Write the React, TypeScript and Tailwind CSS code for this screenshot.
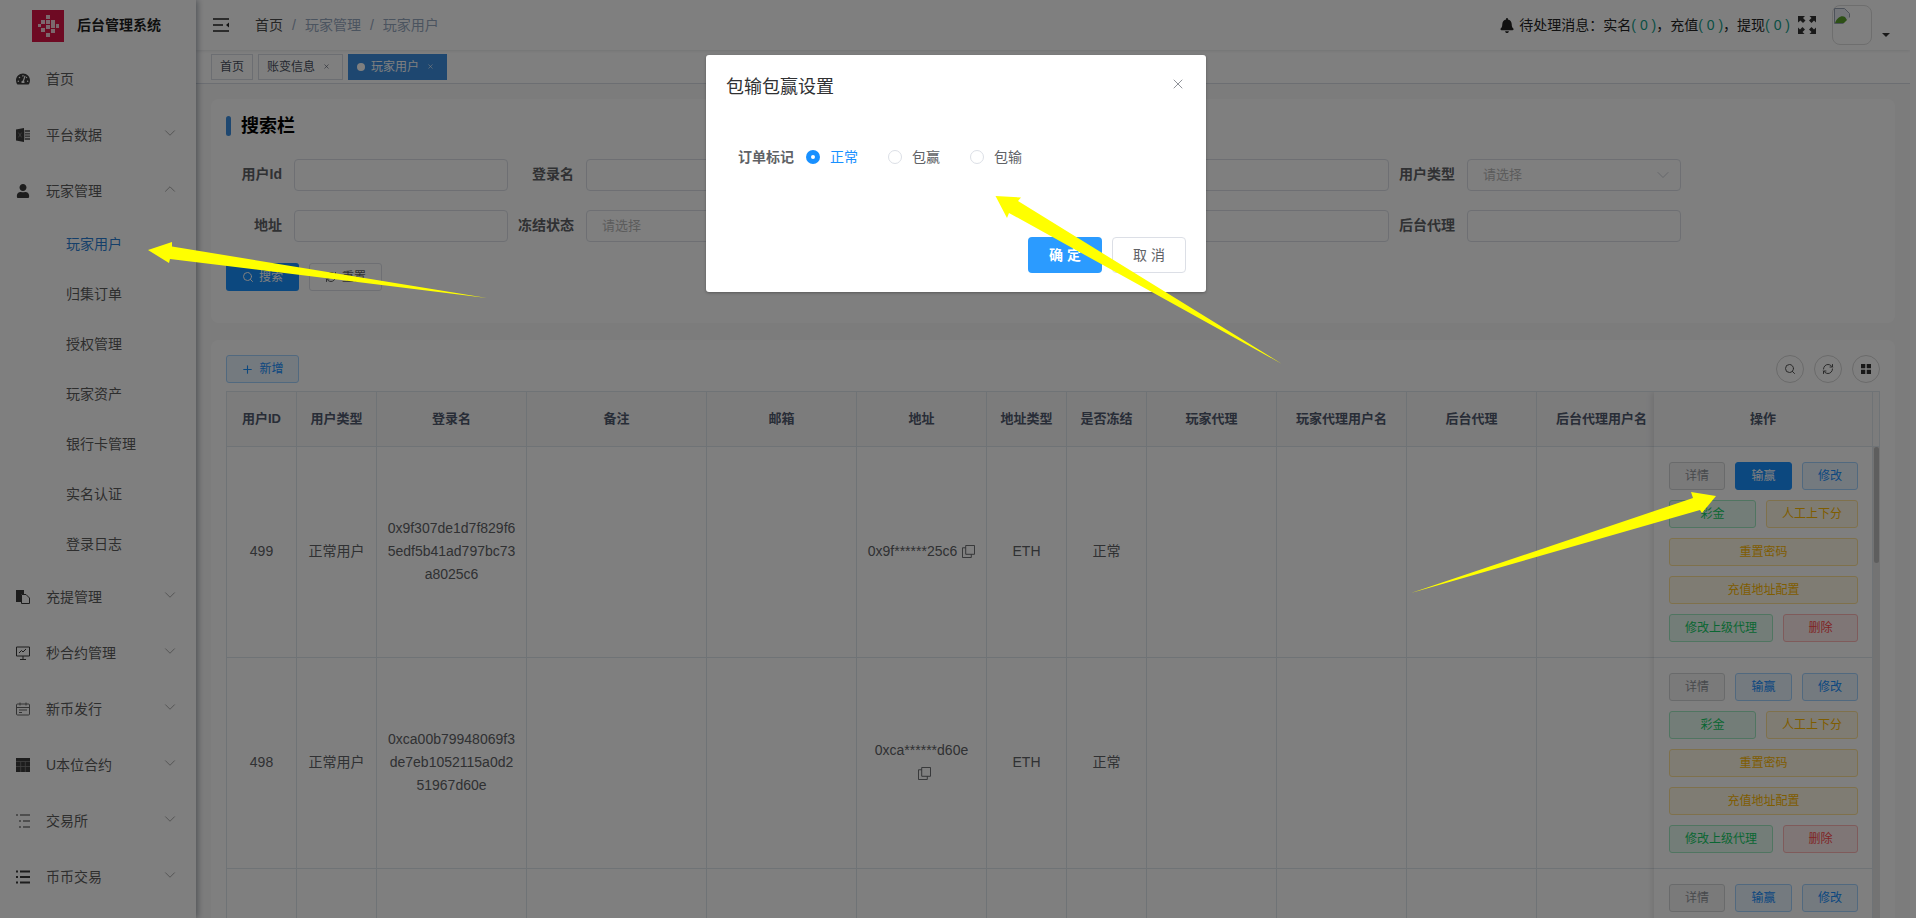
import { ReactNode } from 'react';
import { FaBell, FaTachometerAlt, FaUser } from 'react-icons/fa';
import { ChevronDown, ChevronUp, Plus, RefreshCw, Search, X } from 'lucide-react';

const iconCls = 'w-[14px] h-[14px] text-[#3a3a3a] shrink-0';

const ExcelIcon = () => (
  <svg viewBox="0 0 14 14" className={iconCls}>
    <path d="M0 1.500 8 0v14l-8-1.500z" fill="currentColor" />
    <path d="m2.400 4.600 3.200 4.800m0-4.800L2.400 9.400" stroke="#777" strokeWidth="1" />
    <path d="M8.500 2H14v10H8.500z" fill="#777" />
    <path d="M9 4.500h5M9 7h5M9 9.500h5" stroke="#fff" strokeWidth="0.8" />
  </svg>
);
const FilesIcon = () => (
  <svg viewBox="0 0 14 14" className={iconCls}>
    <path d="M0 0h8v4H5v8H0z" fill="currentColor" />
    <path d="M5.500 4.500H10l3.500 3.500v5.500h-8z" fill="#fff" stroke="currentColor" />
  </svg>
);
const BoardIcon = () => (
  <svg viewBox="0 0 14 14" className={iconCls} fill="none" stroke="currentColor">
    <path d="M.5 1h13v9H.5zM7 10v3M4 13.500h6" />
    <path d="m3 7 2.500-2.500 1.500 1.500 3-3" />
  </svg>
);
const CalendarIcon = () => (
  <svg viewBox="0 0 14 14" className={iconCls} fill="none" stroke="#666">
    <path d="M1.500 2h11a1 1 0 0 1 1 1v9a1 1 0 0 1-1 1h-11a1 1 0 0 1-1-1V3a1 1 0 0 1 1-1zM.5 5.500h13M4 .5v3M10 .5v3" />
    <path d="M3 8h8M3 10.500h3" />
  </svg>
);
const TableIcon = () => (
  <svg viewBox="0 0 14 14" className={iconCls}>
    <path d="M0 0h14v14H0z" fill="currentColor" />
    <path d="M0 3.500h14M0 8.500h14M4.700 3.500V14M9.300 3.500V14" stroke="#808080" strokeWidth="0.8" />
  </svg>
);
const DotListIcon = () => (
  <svg viewBox="0 0 14 14" className={iconCls} fill="none" stroke="currentColor" strokeWidth="1.200">
    <path d="M0 1h2M4 1h10M3 7h2M7 7h7M3 13h2M7 13h7" />
  </svg>
);
const ListIcon = () => (
  <svg viewBox="0 0 14 14" className={iconCls} fill="none" stroke="currentColor" strokeWidth="1.800">
    <path d="M0 1.500h2M4 1.500h10M0 7h2M4 7h10M0 12.500h2M4 12.500h10" />
  </svg>
);

const subMenu = ['玩家用户', '归集订单', '授权管理', '玩家资产', '银行卡管理', '实名认证', '登录日志'];
const sideAfter: [ReactNode, string][] = [
  [<FilesIcon />, '充提管理'],
  [<BoardIcon />, '秒合约管理'],
  [<CalendarIcon />, '新币发行'],
  [<TableIcon />, 'U本位合约'],
  [<DotListIcon />, '交易所'],
  [<ListIcon />, '币币交易'],
];

function MenuRow({ icon, label, arrow = 'down' }: { icon: ReactNode; label: string; arrow?: 'down' | 'up' | 'none' }) {
  return (
    <div className="h-[56px] flex items-center pl-[16px] pr-[17px] text-[14px] text-[#5c5c5c]">
      {icon}
      <span className="ml-[16px] grow">{label}</span>
      {arrow === 'down' && <ChevronDown className="w-[18px] h-[18px] mb-1 text-[#8c8c8c]" strokeWidth={1} />}
      {arrow === 'up' && <ChevronUp className="w-[18px] h-[18px] mb-1 text-[#8c8c8c]" strokeWidth={1} />}
    </div>
  );
}

function Sidebar() {
  return (
    <aside className="w-[196px] h-full shrink-0 bg-white shadow-[2px_0_6px_rgba(0,21,41,0.35)] z-10 overflow-hidden">
      <div className="h-[51px] flex items-center pl-[32px]">
        <svg viewBox="0 0 32 32" className="w-[32px] h-[32px] shrink-0">
          <path d="M0 0h32v32H0z" fill="#dc1446" />
          <g fill="#fff">
            <path d="M14 5h4v4h-4zM9 10h4v4H9zM14 10h4v4h-4zM19 10h4v4h-4zM6 14h3v3H6zM14 15h4v4h-4zM19 14h4v4h-4zM24 14h3v4h-3zM9 18h4v4H9zM19 19h4v4h-4zM14 23h4v4h-4z" opacity="0.8" />
          </g>
        </svg>
        <span className="ml-[13px] text-[14px] font-bold text-[#1f1f1f] whitespace-nowrap">后台管理系统</span>
      </div>
      <MenuRow icon={<FaTachometerAlt className={iconCls} />} label="首页" arrow="none" />
      <MenuRow icon={<ExcelIcon />} label="平台数据" />
      <MenuRow icon={<FaUser className={iconCls} />} label="玩家管理" arrow="up" />
      {subMenu.map((s, i) => (
        <div key={s} className={`h-[50px] flex items-center pl-[66px] text-[14px] ${i === 0 ? 'text-[#2b7fd4]' : 'text-[#5c5c5c]'}`}>
          {s}
        </div>
      ))}
      {sideAfter.map(([icon, label]) => (
        <MenuRow key={label} icon={icon} label={label} />
      ))}
    </aside>
  );
}

function TopBar() {
  return (
    <header className="h-[50px] shrink-0 bg-white flex items-center shadow-[0_1px_3px_rgba(0,21,41,0.1)] relative">
      <svg viewBox="0 0 16 14" className="ml-[17px] w-[16px] h-[14px] text-[#222]">
        <path d="M0 1h16M0 7h10M0 13h16" stroke="currentColor" strokeWidth="1.500" />
        <path d="m16 4.500-3 2.500 3 2.500z" fill="currentColor" />
      </svg>
      <nav className="ml-[26px] flex items-center text-[14px] text-[#97a8be]">
        <span className="text-[#4a4a4a]">首页</span>
        <span className="mx-[9px]">/</span>
        <span>玩家管理</span>
        <span className="mx-[9px]">/</span>
        <span>玩家用户</span>
      </nav>
      <div className="ml-auto flex items-center text-[14px] text-[#222]">
        <FaBell className="w-[14px] h-[15px] mr-[5px]" />
        <span className="whitespace-nowrap">
          待处理消息：实名<span className="text-[#13a08a]">( 0 )</span>，充值<span className="text-[#13a08a]">( 0 )</span>，提现<span className="text-[#13a08a]">( 0 )</span>
        </span>
        <svg viewBox="0 0 18 18" className="ml-[8px] w-[18px] h-[18px] text-[#333]" fill="currentColor">
          <path d="M0 0h7L5 2l2.500 2.500-2.500 2.500L2.500 4.500 0 6.500zM18 0v6.500l-2-2L13.500 7 11 4.500 13.500 2 11.500 0zM0 18v-6.500l2 2L4.500 11 7 13.500 4.500 16l2 2zM18 18h-6.500l2-2L11 13.500l2.500-2.500 2.500 2.500 2-2z" />
        </svg>
        <div className="ml-[16px] w-[40px] h-[40px] rounded-[8px] border border-[#dcdcdc] pl-[1px] pt-[2px]">
          <svg viewBox="0 0 16 16" className="w-[16px] h-[16px]">
            <path d="M.5.500h10l5 5v10H.5z" fill="#e8edf5" stroke="#9aa4b4" />
            <path d="M1 15c2-6 7-8 10-6l4 6z" fill="#5aa02c" />
            <path d="m9 16 7-7v7z" fill="#fff" />
          </svg>
        </div>
        <div className="ml-[10px] mr-[20px] mt-[20px] w-0 h-0 border-x-[4px] border-x-transparent border-t-[4px] border-t-[#333]" />
      </div>
    </header>
  );
}

function TagsBar() {
  return (
    <div className="h-[34px] shrink-0 bg-white border-b border-[#d8dce5] flex items-center pl-[15px] gap-[5px] text-[12px] text-[#495060]">
      <span className="h-[26px] w-[42px] border border-[#d8dce5] flex items-center justify-center">首页</span>
      <span className="h-[26px] w-[85px] border border-[#d8dce5] flex items-center pl-[8px]">
        账变信息
        <X className="ml-[8px] w-[7px] h-[7px]" />
      </span>
      <span className="h-[26px] w-[99px] bg-[#3d8fe0] text-white flex items-center pl-[9px]">
        <i className="w-[8px] h-[8px] rounded-full bg-white mr-[6px]" />
        玩家用户
        <X className="ml-[8px] w-[7px] h-[7px]" />
      </span>
    </div>
  );
}

function Field({ label, select, wide }: { label: string; select?: boolean; wide?: boolean }) {
  return (
    <div className={`flex items-center ${wide ? 'flex-1' : 'w-[282px]'}`}>
      <label className="w-[68px] shrink-0 pr-[12px] text-right text-[14px] font-bold text-[#606266] whitespace-nowrap -mt-[1px]">{label}</label>
      <div className="grow h-[32px] rounded-[4px] border border-[#dcdfe6] bg-white flex items-center justify-between pl-[15px] pr-[7px] text-[13px] text-[#b8b8b8]">
        {select && (
          <>
            请选择
            <ChevronDown className="w-[20px] h-[20px] text-[#c0c4cc]" strokeWidth={1} />
          </>
        )}
      </div>
    </div>
  );
}

function SearchCard() {
  return (
    <section className="shrink-0 mx-[15px] mt-[15px] h-[224px] bg-white rounded-[8px] px-[15px] pt-[17px]">
      <div className="flex items-center h-[20px] mb-[23px]">
        <i className="w-[5px] h-[20px] rounded-[3px] bg-[#3d8fe0] mr-[10px]" />
        <h2 className="text-[18px] font-bold text-black">搜索栏</h2>
      </div>
      <div className="flex gap-[10px] w-[1455px]">
        <Field label="用户Id" />
        <Field label="登录名" wide />
        <Field label="备注" wide />
        <Field label="用户类型" select />
      </div>
      <div className="flex gap-[10px] w-[1455px] mt-[19px]">
        <Field label="地址" />
        <Field label="冻结状态" select wide />
        <Field label="邮箱" wide />
        <Field label="后台代理" />
      </div>
      <div className="flex gap-[10px] mt-[21px] text-[12px]">
        <button className="w-[73px] h-[28px] rounded-[3px] bg-[#1890ff] text-white flex items-center justify-center gap-[5px]">
          <Search className="w-[12px] h-[12px]" />
          搜索
        </button>
        <button className="w-[73px] h-[28px] rounded-[3px] border border-[#dcdfe6] text-[#606266] flex items-center justify-center gap-[5px]">
          <RefreshCw className="w-[12px] h-[12px]" />
          重置
        </button>
      </div>
    </section>
  );
}

const columns: [string, number][] = [
  ['用户ID', 70],
  ['用户类型', 80],
  ['登录名', 150],
  ['备注', 180],
  ['邮箱', 150],
  ['地址', 130],
  ['地址类型', 80],
  ['是否冻结', 80],
  ['玩家代理', 130],
  ['玩家代理用户名', 130],
  ['后台代理', 130],
  ['后台代理用户名', 130],
];

const rows = [
  { id: '499', type: '正常用户', login: '0x9f307de1d7f829f65edf5b41ad797bc73a8025c6', addr: '0x9f******25c6', net: 'ETH', frozen: '正常' },
  { id: '498', type: '正常用户', login: '0xca00b79948069f3de7eb1052115a0d251967d60e', addr: '0xca******d60e', net: 'ETH', frozen: '正常' },
  { id: '', type: '', login: '', addr: '', net: '', frozen: '' },
];

const thCls = 'h-[55px] border-r border-b border-[#dfe6ec] bg-[#f8f8f9] text-[13px] font-bold text-[#515a6e] text-center whitespace-nowrap overflow-hidden';
const tdCls = 'h-[211px] border-r border-b border-[#dfe6ec] px-[10px] pb-[2px] text-[14px] leading-[23px] text-[#606266] text-center';

const CopyIcon = () => (
  <svg viewBox="0 0 14 14" className="inline-block ml-[5px] w-[13px] h-[13px] align-[-2px]" fill="none" stroke="currentColor">
    <path d="M4 .500h9.500V10H4z" />
    <path d="M4 3H.500v10.500H10V10" />
  </svg>
);

const btnTone = {
  info: 'bg-[#f4f4f5] border-[#d3d4d6] text-[#909399]',
  primary: 'bg-[#e8f4ff] border-[#a3d3ff] text-[#1890ff]',
  active: 'bg-[#1890ff] border-[#1890ff] text-white',
  success: 'bg-[#e7faf0] border-[#a1ebc2] text-[#13ce66]',
  warning: 'bg-[#fff8e6] border-[#ffe399] text-[#ffba00]',
  danger: 'bg-[#ffeded] border-[#ffb6b6] text-[#ff4949]',
};

function OpBtn({ tone, wide, children }: { tone: keyof typeof btnTone; wide?: boolean; children: ReactNode }) {
  return (
    <button className={`h-[28px] rounded-[3px] border text-[12px] px-[15px] whitespace-nowrap ${btnTone[tone]} ${wide ? 'grow' : ''}`}>
      {children}
    </button>
  );
}

// the last row is only just on screen, so it shows the first line of buttons
function OpButtons({ active, firstLineOnly }: { active?: boolean; firstLineOnly?: boolean }) {
  return (
    <div className="flex flex-col gap-[10px] w-[189px]">
      <div className="flex gap-[10px] justify-between">
        <OpBtn tone="info">详情</OpBtn>
        <OpBtn tone={active ? 'active' : 'primary'} wide>输赢</OpBtn>
        <OpBtn tone="primary">修改</OpBtn>
      </div>
      {!firstLineOnly && (
        <>
          <div className="flex gap-[10px]">
            <OpBtn tone="success" wide>彩金</OpBtn>
            <OpBtn tone="warning">人工上下分</OpBtn>
          </div>
          <div className="flex">
            <OpBtn tone="warning" wide>重置密码</OpBtn>
          </div>
          <div className="flex">
            <OpBtn tone="warning" wide>充值地址配置</OpBtn>
          </div>
          <div className="flex gap-[10px]">
            <OpBtn tone="success">修改上级代理</OpBtn>
            <OpBtn tone="danger" wide>删除</OpBtn>
          </div>
        </>
      )}
    </div>
  );
}

function TableCard() {
  return (
    <section className="shrink-0 mx-[15px] mt-[17px] bg-white rounded-[8px] px-[15px] pt-[15px]">
      <div className="flex items-center h-[28px] mb-[8px]">
        <button className="w-[73px] h-[28px] rounded-[3px] border border-[#a3d3ff] bg-[#e8f4ff] text-[#1890ff] text-[12px] flex items-center justify-center gap-[5px]">
          <Plus className="w-[13px] h-[13px]" />
          新增
        </button>
        <div className="ml-auto flex gap-[10px] text-[#555]">
          <span className="w-[28px] h-[28px] rounded-full border border-[#d5d5d5] flex items-center justify-center">
            <Search className="w-[12px] h-[12px]" />
          </span>
          <span className="w-[28px] h-[28px] rounded-full border border-[#d5d5d5] flex items-center justify-center">
            <RefreshCw className="w-[12px] h-[12px]" />
          </span>
          <span className="w-[28px] h-[28px] rounded-full border border-[#d5d5d5] flex items-center justify-center">
            <svg viewBox="0 0 12 12" className="w-[12px] h-[12px]" fill="#333">
              <path d="M1 1h4.300v4.300H1zM6.700 1H11v4.300H6.700zM1 6.700h4.300V11H1zM6.700 6.700H11V11H6.700z" />
            </svg>
          </span>
        </div>
      </div>

      <div className="relative w-[1654px] h-[600px] overflow-hidden border-l border-t border-[#dfe6ec]">
        <table className="table-fixed w-[1440px] border-separate border-spacing-0">
          <colgroup>
            {columns.map(([name, w]) => (
              <col key={name} style={{ width: w }} />
            ))}
          </colgroup>
          <thead>
            <tr>
              {columns.map(([name]) => (
                <th key={name} className={thCls}>{name}</th>
              ))}
            </tr>
          </thead>
          <tbody>
            {rows.map((r, i) => (
              <tr key={i}>
                <td className={tdCls}>{r.id}</td>
                <td className={tdCls}>{r.type}</td>
                <td className={`${tdCls} break-all`}>{r.login}</td>
                <td className={tdCls} />
                <td className={tdCls} />
                <td className={tdCls}>
                  {r.addr}
                  {r.addr && <CopyIcon />}
                </td>
                <td className={tdCls}>{r.net}</td>
                <td className={tdCls}>{r.frozen}</td>
                <td className={tdCls} />
                <td className={tdCls} />
                <td className={tdCls} />
                <td className={tdCls} />
              </tr>
            ))}
          </tbody>
        </table>

        {/* fixed right column sits over the scrolling table */}
        <div className="absolute top-0 right-[7px] w-[219px] bg-white shadow-[-2px_0_6px_rgba(0,0,0,0.1)]">
          <div className={`${thCls} flex items-center justify-center`}>操作</div>
          {rows.map((_, i) => (
            <div key={i} className="h-[211px] border-b border-r border-[#dfe6ec] pt-[15px] pl-[15px]">
              <OpButtons active={i === 0} firstLineOnly={i === 2} />
            </div>
          ))}
        </div>

        {/* scrollbar */}
        <div className="absolute top-0 right-0 w-[7px] h-[55px] border-b border-r border-[#dfe6ec] bg-[#f8f8f9]" />
        <div className="absolute top-[55px] right-0 w-[7px] bottom-0 bg-[#e6e6e6]">
          <div className="mx-auto w-[5px] h-[116px] rounded-[3px] bg-[#bcbcbc]" />
        </div>
      </div>
    </section>
  );
}

function Modal() {
  return (
    <div className="absolute left-[706px] top-[55px] w-[500px] h-[237px] bg-white rounded-[3px] shadow-[0_1px_3px_rgba(0,0,0,0.3)] flex flex-col">
      <div className="h-[64px] flex items-center justify-between pl-[20px] pr-[20px] shrink-0 pt-[1px]">
        <h3 className="text-[18px] text-[#303133]">包输包赢设置</h3>
        <X className="w-[16px] h-[16px] text-[#909399] -mt-[8px]" strokeWidth={1.5} />
      </div>
      <div className="grow pt-[24px] pl-[32px]">
        <div className="h-[28px] flex items-center text-[14px]">
          <span className="font-bold text-[#606266] w-[68px]">订单标记</span>
          <span className="w-[14px] h-[14px] rounded-full bg-[#1890ff] flex items-center justify-center">
            <i className="w-[4px] h-[4px] rounded-full bg-white" />
          </span>
          <span className="ml-[10px] text-[#1890ff]">正常</span>
          <span className="ml-[30px] w-[14px] h-[14px] rounded-full border border-[#dcdfe6]" />
          <span className="ml-[10px] text-[#606266]">包赢</span>
          <span className="ml-[30px] w-[14px] h-[14px] rounded-full border border-[#dcdfe6]" />
          <span className="ml-[10px] text-[#606266]">包输</span>
        </div>
      </div>
      <div className="flex justify-end gap-[10px] pr-[20px] pb-[19px] shrink-0 text-[14px]">
        <button className="w-[74px] h-[36px] rounded-[4px] bg-[#2b9bff] text-white font-bold">确 定</button>
        <button className="w-[74px] h-[36px] rounded-[4px] border border-[#dcdfe6] bg-white text-[#606266]">取 消</button>
      </div>
    </div>
  );
}

// yellow annotation arrows drawn on top of the screenshot
function Arrows() {
  return (
    <svg viewBox="0 0 1916 918" className="absolute inset-0 w-[1916px] h-[918px] pointer-events-none">
      <g fill="#ffff00">
        <polygon points="148,250 172,242 172,246.500 487,298 170,259 169,263" />
        <polygon points="995.500,196 1021,197.500 1018,201 1282,364 1009,213 1007,218" />
        <polygon points="1716,496 1691,492 1693,498 1411,593 1700,510 1702,513" />
      </g>
    </svg>
  );
}

export default function App() {
  return (
    <div className="relative w-[1916px] h-[918px] overflow-hidden flex bg-white font-['Liberation_Sans','Noto_Sans_CJK_SC',sans-serif]">
      <Sidebar />
      <main className="w-[1714px] h-full flex flex-col bg-[#f9f9f9] overflow-hidden">
        <TopBar />
        <TagsBar />
        <SearchCard />
        <TableCard />
      </main>
      <div className="absolute inset-0 z-20 bg-black/50">
        <Modal />
      </div>
      <div className="absolute inset-0 z-30 pointer-events-none">
        <Arrows />
      </div>
    </div>
  );
}
